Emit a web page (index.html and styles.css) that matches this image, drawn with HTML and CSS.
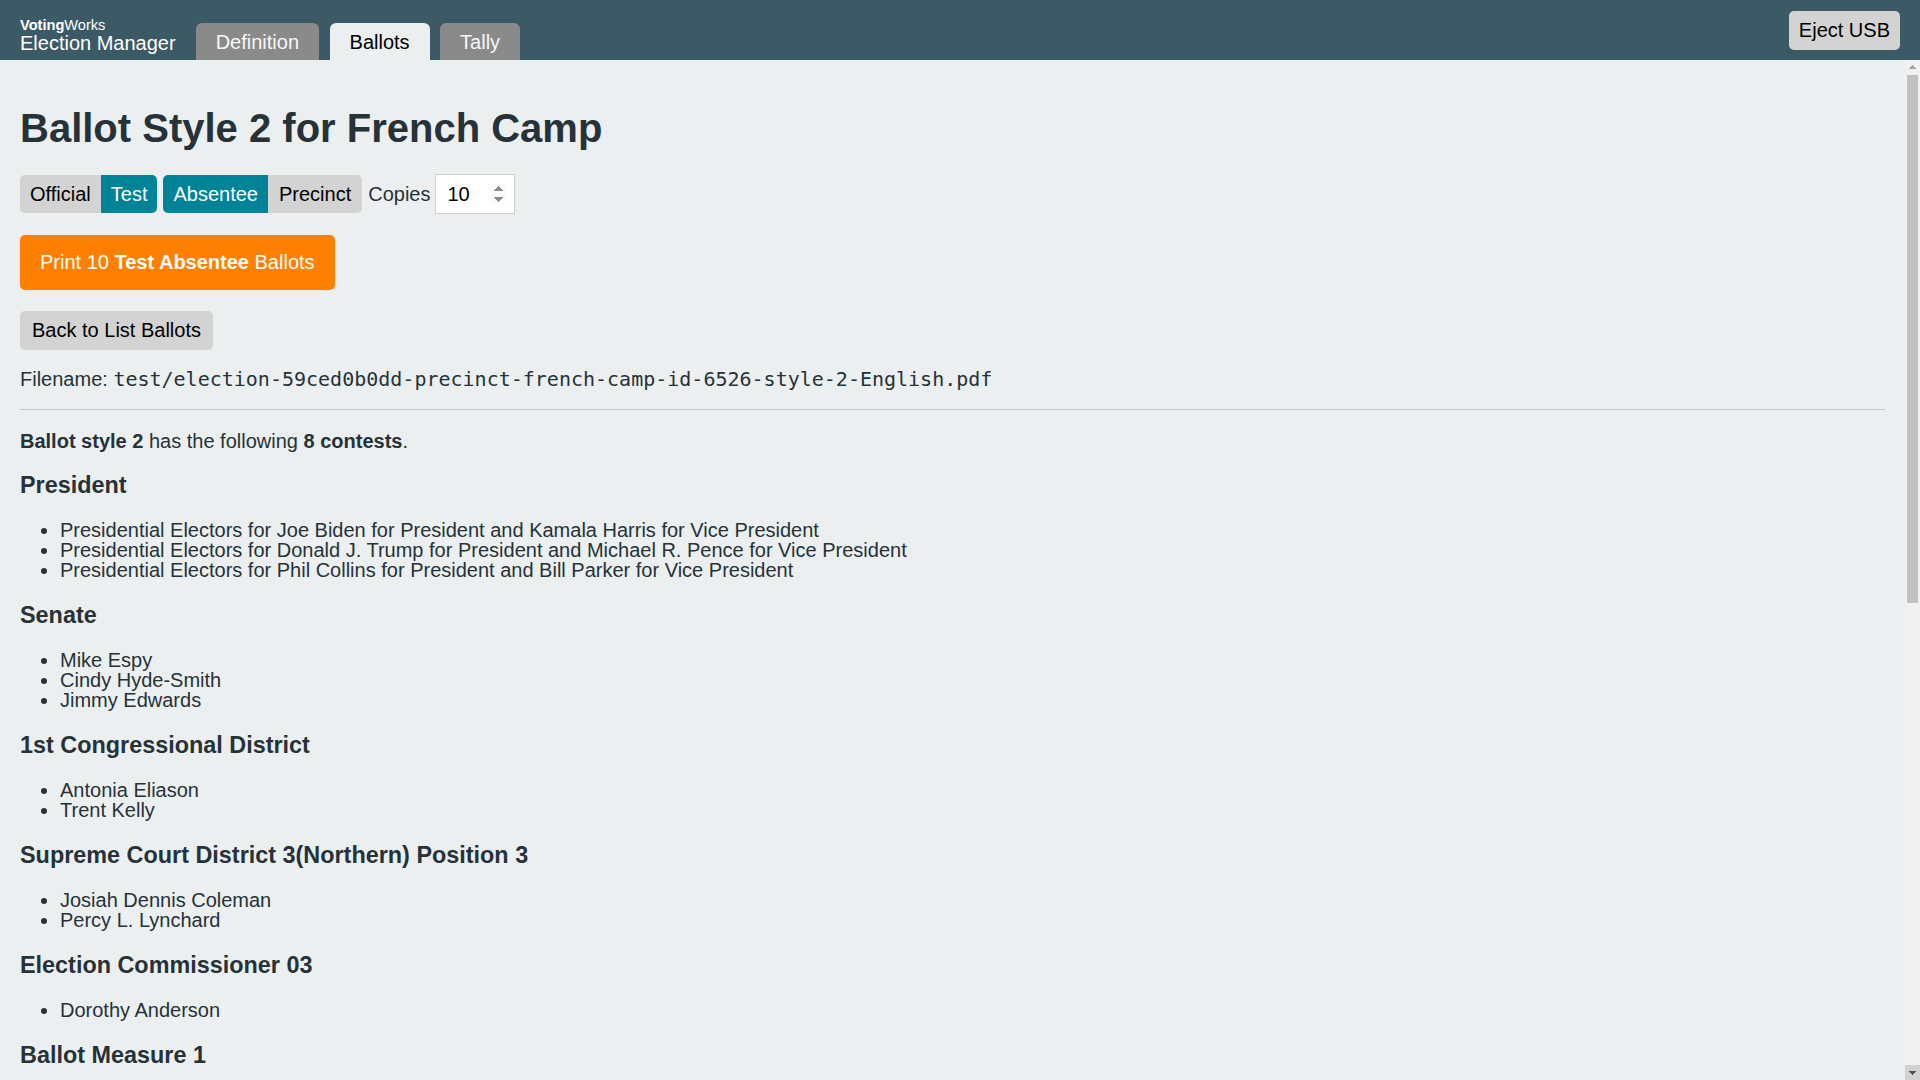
FILE: index.html
```html
<!DOCTYPE html>
<html lang="en">
<head>
<meta charset="utf-8">
<title>Election Manager</title>
<link rel="stylesheet" href="styles.css">
</head>
<body>
<div class="app">
  <header class="topbar">
    <div class="brand-nav">
      <div class="brand">
        <div class="brand-org"><strong>Voting</strong>Works</div>
        <div class="brand-app">Election Manager</div>
      </div>
      <nav class="tabs">
        <a class="tab">Definition</a>
        <a class="tab tab-active">Ballots</a>
        <a class="tab">Tally</a>
      </nav>
    </div>
    <button class="btn eject">Eject USB</button>
  </header>
  <div class="workspace">
    <main class="main">
      <h1 class="title">Ballot Style 2 for French Camp</h1>
      <div class="controls">
        <div class="segmented">
          <button class="seg seg-a">Official</button>
          <button class="seg seg-on">Test</button>
        </div>
        <div class="segmented">
          <button class="seg seg-on">Absentee</button>
          <button class="seg seg-b">Precinct</button>
        </div>
        <label class="copies-label" for="copies">Copies</label>
        <input id="copies" class="copies" type="number" value="10" min="1">
      </div>
      <div class="row print-row">
        <button class="btn btn-primary">Print 10 <strong>Test Absentee</strong> Ballots</button>
      </div>
      <div class="row back-row">
        <button class="btn btn-back">Back to List Ballots</button>
      </div>
      <p class="filename">Filename: <code class="mono">test/election-59ced0b0dd-precinct-french-camp-id-6526-style-2-English.pdf</code></p>
      <hr class="divider">
      <p class="summary"><strong>Ballot style 2</strong> has the following <strong>8 contests</strong>.</p>

      <h3 class="contest">President</h3>
      <ul class="choices">
        <li>Presidential Electors for Joe Biden for President and Kamala Harris for Vice President</li>
        <li>Presidential Electors for Donald J. Trump for President and Michael R. Pence for Vice President</li>
        <li>Presidential Electors for Phil Collins for President and Bill Parker for Vice President</li>
      </ul>

      <h3 class="contest">Senate</h3>
      <ul class="choices">
        <li>Mike Espy</li>
        <li>Cindy Hyde-Smith</li>
        <li>Jimmy Edwards</li>
      </ul>

      <h3 class="contest">1st Congressional District</h3>
      <ul class="choices">
        <li>Antonia Eliason</li>
        <li>Trent Kelly</li>
      </ul>

      <h3 class="contest">Supreme Court District 3(Northern) Position 3</h3>
      <ul class="choices">
        <li>Josiah Dennis Coleman</li>
        <li>Percy L. Lynchard</li>
      </ul>

      <h3 class="contest">Election Commissioner 03</h3>
      <ul class="choices">
        <li>Dorothy Anderson</li>
      </ul>

      <h3 class="contest">Ballot Measure 1</h3>
      <ul class="choices">
        <li>FOR APPROVAL OF EITHER Initiative No. 65 OR Alternative Measure No. 65 A</li>
        <li>AGAINST BOTH Initiative Measure No. 65 AND Alternative Measure No. 65 A</li>
        <li>FOR Initiative Measure No. 65</li>
        <li>FOR Alternative Measure No. 65 A</li>
      </ul>

      <h3 class="contest">Ballot Measure 2</h3>
      <ul class="choices">
        <li>Yes</li>
        <li>No</li>
      </ul>

      <h3 class="contest">Ballot Measure 3</h3>
      <ul class="choices">
        <li>Yes</li>
        <li>No</li>
      </ul>
    </main>
    <div class="scrollbar" aria-hidden="true">
      <div class="sb-btn sb-up"></div>
      <div class="sb-track"><div class="sb-thumb"></div></div>
      <div class="sb-btn sb-down"></div>
    </div>
  </div>
</div>
</body>
</html>
```
FILE: styles.css
```css
html, body {
  margin: 0;
  height: 100%;
}

body {
  font-family: "Liberation Sans", Arial, Helvetica, sans-serif;
  font-size: 20px;
  line-height: 20px;
  color: #263238;
  background: #ebeff0;
}

.app {
  display: flex;
  flex-direction: column;
  height: 100vh;
  overflow: hidden;
}

/* ---------- top bar ---------- */
.topbar {
  flex: none;
  height: 60px;
  box-sizing: border-box;
  padding: 0 20px;
  background: #3b5a65;
  display: flex;
  justify-content: space-between;
  align-items: center;
}

.brand-nav {
  align-self: stretch;
  display: flex;
  align-items: flex-end;
  gap: 20px;
}

.brand {
  color: #ffffff;
  padding-bottom: 7px;
}

.brand-org {
  font-size: 14.6px;
  line-height: 12px;
}

.brand-app {
  font-size: 20px;
  line-height: 20px;
  margin-top: 2px;
}

.tabs {
  display: flex;
  gap: 10.5px;
}

.tab {
  display: block;
  padding: 8px 20px 6px;
  line-height: 23px;
  background: #8a8a8a;
  color: #f7f7f7;
  border-radius: 6px 6px 0 0;
  cursor: pointer;
}

.tab-active {
  background: #ebeff0;
  color: #000000;
}

/* ---------- buttons ---------- */
.btn {
  font-family: inherit;
  font-size: 20px;
  line-height: 23px;
  padding: 8px 10px;
  border: 0;
  border-radius: 5px;
  background: #d3d3d3;
  color: #000000;
  cursor: pointer;
}

.btn-primary {
  padding: 16px 20px;
  background: #ff8000;
  color: #ffffff;
}

.btn-back {
  padding-left: 12px;
  padding-right: 12px;
}

/* ---------- workspace ---------- */
.workspace {
  flex: 1;
  min-height: 0;
  display: flex;
}

.main {
  flex: 1;
  min-width: 0;
  overflow: hidden;
  padding: 0 20px;
}

/* drawn scrollbar */
.scrollbar {
  flex: none;
  width: 15px;
  display: flex;
  flex-direction: column;
  background: #f1f1f1;
}

.sb-btn {
  flex: none;
  height: 15px;
}

.sb-up {
  background:
    linear-gradient(to top left, #a3a3a3 50%, transparent 50%) 3.5px 5px / 4px 4px no-repeat,
    linear-gradient(to top right, #a3a3a3 50%, transparent 50%) 7.5px 5px / 4px 4px no-repeat,
    #f1f1f1;
}

.sb-down {
  background:
    linear-gradient(to bottom left, #505050 50%, transparent 50%) 3.5px 5.5px / 4px 4px no-repeat,
    linear-gradient(to bottom right, #505050 50%, transparent 50%) 7.5px 5.5px / 4px 4px no-repeat,
    #d2d2d2;
}

.sb-track {
  flex: 1;
  padding: 0 2px;
}

.sb-thumb {
  height: 528px;
  background: #c1c1c1;
}

/* ---------- content ---------- */
.title {
  margin: 44px 0 0;
  font-size: 40px;
  line-height: 48px;
  font-weight: bold;
}

.controls {
  margin-top: 22px;
  display: flex;
  align-items: center;
  gap: 5px;
}

.segmented {
  display: flex;
  border-radius: 5px;
  overflow: hidden;
}

.segmented + .segmented {
  margin-left: 1px;
}

.seg {
  font-family: inherit;
  font-size: 20px;
  line-height: 23px;
  padding: 8px 10px 7px;
  border: 0;
  background: #d3d3d3;
  color: #000000;
  cursor: pointer;
}

.seg-b {
  padding-left: 11px;
  padding-right: 11px;
}

.seg-on {
  background: #008396;
  color: #ffffff;
}

.copies-label {
  margin-left: 1px;
}

.copies {
  box-sizing: border-box;
  width: 80px;
  height: 40px;
  padding: 0 8px 0 11px;
  border: 1px solid #cccccc;
  background: #ffffff;
  color: #000000;
  font-family: inherit;
  font-size: 20px;
}

.copies::-webkit-inner-spin-button,
.copies::-webkit-outer-spin-button {
  opacity: 1;
}

.row {
  display: flex;
}

.print-row {
  margin-top: 21px;
}

.back-row {
  margin-top: 21px;
}

.filename {
  margin: 19px 0 0;
  line-height: 20px;
}

.mono {
  font-family: "DejaVu Sans Mono", "Liberation Mono", monospace;
  font-size: 20px;
  line-height: 20px;
}

.divider {
  margin: 20px 0 0;
  border: 0;
  border-top: 1px solid #c3c9cc;
  height: 0;
}

.summary {
  margin: 21px 0 0;
}

.contest {
  margin: 22.5px 0 0;
  font-size: 23.4px;
  line-height: 27px;
  font-weight: bold;
}

.summary + .contest {
  margin-top: 21px;
}

.choices {
  margin: 20.5px 0 0;
  padding-left: 40px;
}

.choices li {
  line-height: 20px;
}
```
